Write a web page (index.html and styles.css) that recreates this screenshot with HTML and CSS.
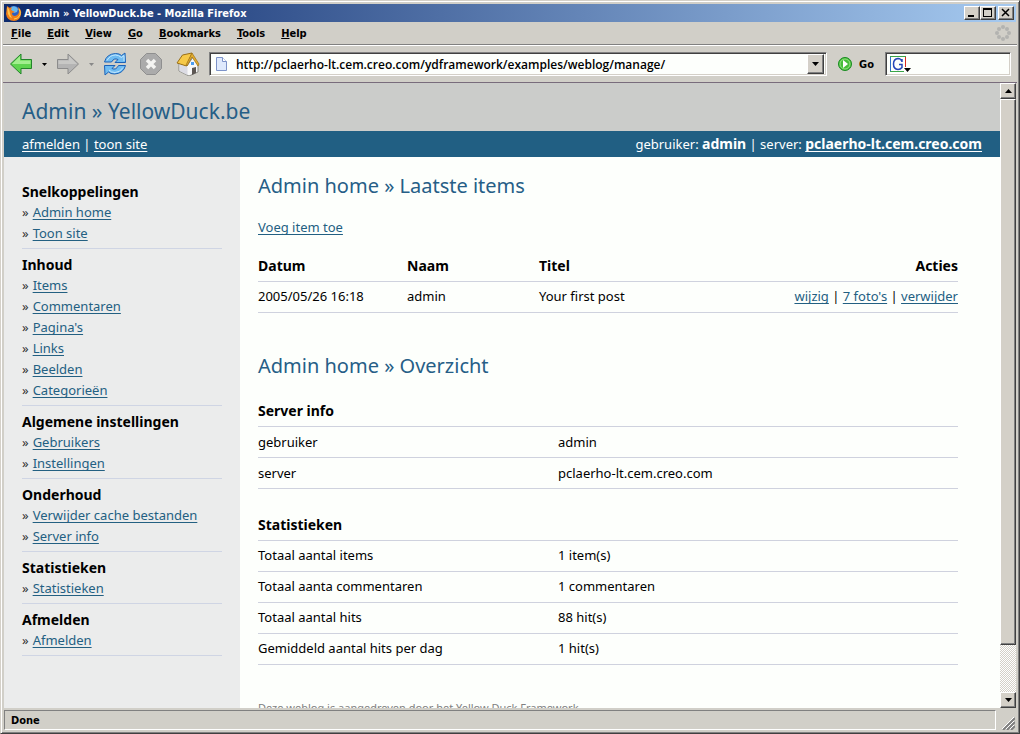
FILE: index.html
```html
<!DOCTYPE html>
<html lang="nl">
<head>
<meta charset="utf-8">
<title>Admin » YellowDuck.be</title>
<link rel="stylesheet" href="styles.css">
</head>
<body>
<div class="window">
  <header class="titlebar">
    <svg class="fox" width="16" height="16" viewBox="0 0 16 16" aria-hidden="true">
      <circle cx="8" cy="8" r="7" fill="#2d5fc0"/>
      <path d="M5 2q5-2 7 2l-1 3-3 1-3-3z" fill="#65b7ee"/>
      <path d="M1 1l3 2 2-1-1 3 4 2-3 1q0 3 3 3 4-1 4-5l-1-4q4 3 3 7-1 7-7 7-7 0-8-7z" fill="#ee7d1a"/>
      <path d="M1 2l1 7q1 3 4 4-2-3-2-5l-1-4z" fill="#ffc54a"/>
      <path d="M13 4q2 3 1 6-2 4-6 4" fill="none" stroke="#ffd04a"/>
    </svg>
    <span class="caption">Admin » YellowDuck.be - Mozilla Firefox</span>
    <button class="winbtn" type="button" aria-label="Minimize"><svg width="12" height="10" viewBox="0 0 12 10"><path d="M2 7h6v2H2z"/></svg></button>
    <button class="winbtn" type="button" aria-label="Maximize"><svg width="12" height="10" viewBox="0 0 12 10"><path fill-rule="evenodd" d="M1 0h9v9H1zM2 2v6h7V2z"/></svg></button>
    <button class="winbtn close" type="button" aria-label="Close"><svg width="12" height="10" viewBox="0 0 12 10"><path d="M2 1l7 7M9 1L2 8" stroke="#000" stroke-width="1.500"/></svg></button>
  </header>
  <nav class="menubar">
    <button type="button"><u>F</u>ile</button>
    <button type="button"><u>E</u>dit</button>
    <button type="button"><u>V</u>iew</button>
    <button type="button"><u>G</u>o</button>
    <button type="button"><u>B</u>ookmarks</button>
    <button type="button"><u>T</u>ools</button>
    <button type="button"><u>H</u>elp</button>
    <svg class="throbber" width="16" height="16" viewBox="0 0 16 16" fill="#b3b3b0" aria-hidden="true">
      <circle cx="8" cy="2" r="2"/><circle cx="12" cy="4" r="2"/><circle cx="14" cy="8" r="2"/><circle cx="12" cy="12" r="2"/><circle cx="8" cy="14" r="2"/><circle cx="4" cy="12" r="2"/><circle cx="2" cy="8" r="2"/><circle cx="4" cy="4" r="2"/>
    </svg>
  </nav>
  <div class="toolbar">
    <button class="tool" type="button" aria-label="Back"><svg width="24" height="24" viewBox="0 0 24 24"><path d="M1.500 12L12 2v5.500h10.500v9H12V22z" fill="#5fd44f" stroke="#23842a" stroke-linejoin="round"/><path d="M3 12l8-8v4.500h10.500V12z" fill="#a2ee8e"/></svg></button>
    <button class="drop" type="button" aria-label="Back history"><svg width="5" height="3" viewBox="0 0 5 3"><path d="M0 0h5L2.500 3z"/></svg></button>
    <button class="tool" type="button" aria-label="Forward"><svg width="24" height="24" viewBox="0 0 24 24"><path d="M22.500 12L12 2v5.500H1.500v9H12V22z" fill="#b4b4b4" stroke="#8c8c8c" stroke-linejoin="round"/><path d="M21 12l-8-8v4.500H2.500V12z" fill="#c8c8c6"/></svg></button>
    <button class="drop" type="button" aria-label="Forward history"><svg width="5" height="3" viewBox="0 0 5 3"><path d="M0 0h5L2.500 3z" fill="#888"/></svg></button>
    <button class="tool" type="button" aria-label="Reload"><svg width="24" height="24" viewBox="0 0 24 24"><g fill="#6fbcf2" stroke="#1c62b7" stroke-linejoin="round"><path d="M1.500 10q2-8 11-8.500 4 0 6 2L22 1l.5 9.500H12l3-3q-4-2-6.500 2.500z"/><path d="M22.500 13.500q-2 8-11 8.500-4 0-6-2L2 23l-.5-9.500H12l-3 3q4 2 6.500-3z"/></g><path d="M4 8.500Q7 3 12.500 3q3 0 6 2.500L21 3.500V9M20 15.500q-3 5-8 5-4 0-6-2.500" fill="none" stroke="#c5e8ff"/></svg></button>
    <button class="tool stop" type="button" aria-label="Stop"><svg width="24" height="24" viewBox="0 0 24 24"><path d="M7.500 1.500h9l6 6v9l-6 6h-9l-6-6v-9z" fill="#ababab" stroke="#8f8f8f"/><path d="M8 8l8 8M16 8l-8 8" stroke="#f4f4f2" stroke-width="3.500"/></svg></button>
    <button class="tool home" type="button" aria-label="Home"><svg width="24" height="24" viewBox="0 0 24 24"><path d="M3 11l8 3 6-9 5 8v7l-9 4-10-5z" fill="#f8f8f8" stroke="#8a8a84" stroke-linejoin="round"/><path d="M3.500 12l8 3v8l-8-4z" fill="#dcdce4"/><path d="M16 16l4-1v6l-4 2z" fill="#5d5753"/><path d="M15 10h3v3h-3z" fill="#4a9cf0"/><path d="M6.500 3L16 1l-5.500 13-9.500-3z" fill="#f6c948" stroke="#9a6f18" stroke-linejoin="round"/><path d="M16 1l7 11-1 2-6-9-5 9-1-1z" fill="#e3ad2e" stroke="#9a6f18" stroke-width=".7" stroke-linejoin="round"/></svg></button>
    <div class="address">
      <svg width="14" height="16" viewBox="0 0 14 16" aria-hidden="true"><path d="M1.500 1.500h6l4 4v9h-10z" fill="#dfeafc" stroke="#7d93c8"/><path d="M7.500 1.500v4h4" fill="#fff" stroke="#7d93c8"/></svg>
      <input type="text" aria-label="Address" value="http://pclaerho-lt.cem.creo.com/ydframework/examples/weblog/manage/">
      <button class="raised addrdrop" type="button" aria-label="Show history"><svg width="7" height="4" viewBox="0 0 7 4"><path d="M0 0h7L3.500 4z"/></svg></button>
    </div>
    <button class="go" type="button"><svg width="14" height="14" viewBox="0 0 14 14" aria-hidden="true"><circle cx="7" cy="7" r="6.500" fill="#47bd3a" stroke="#188b20"/><circle cx="7" cy="7" r="5" fill="none" stroke="#a4ea90" stroke-width=".8"/><path d="M5 3l5 4-5 4z" fill="#fff"/></svg>Go</button>
    <div class="search">
      <svg width="22" height="18" viewBox="0 0 22 18" aria-hidden="true"><path d="M.5 1v15" stroke="#2f6fc4"/><path d="M0 1.500h16M0 16.500h14" stroke="#3aa548"/><path d="M15.500 2v10" stroke="#d92a20"/><path d="M12 7V4M12 6.500Q11 3.500 8 3.500 3.500 4 3.500 9T8 14.500q2.500 0 4-2V9.500H9" fill="none" stroke="#2546b8" stroke-width="1.500"/><path d="M14 13h7l-3.500 4z"/></svg>
      <input type="text" aria-label="Search">
    </div>
  </div>
  <div class="viewport">
    <div class="page">
      <h1 class="site">Admin » YellowDuck.be</h1>
      <div class="bluebar">
        <div><a href="#">afmelden</a> | <a href="#">toon site</a></div>
        <div>gebruiker: <b>admin</b> | server: <a href="#"><b>pclaerho-lt.cem.creo.com</b></a></div>
      </div>
      <div class="columns">
        <aside class="side">
          <section><h3>Snelkoppelingen</h3><ul><li><a href="#">Admin home</a></li><li><a href="#">Toon site</a></li></ul></section>
          <section><h3>Inhoud</h3><ul><li><a href="#">Items</a></li><li><a href="#">Commentaren</a></li><li><a href="#">Pagina's</a></li><li><a href="#">Links</a></li><li><a href="#">Beelden</a></li><li><a href="#">Categorieën</a></li></ul></section>
          <section><h3>Algemene instellingen</h3><ul><li><a href="#">Gebruikers</a></li><li><a href="#">Instellingen</a></li></ul></section>
          <section><h3>Onderhoud</h3><ul><li><a href="#">Verwijder cache bestanden</a></li><li><a href="#">Server info</a></li></ul></section>
          <section><h3>Statistieken</h3><ul><li><a href="#">Statistieken</a></li></ul></section>
          <section><h3>Afmelden</h3><ul><li><a href="#">Afmelden</a></li></ul></section>
        </aside>
        <main class="main">
          <h2>Admin home » Laatste items</h2>
          <p class="add"><a href="#">Voeg item toe</a></p>
          <table class="items">
            <colgroup><col class="date"><col class="name"><col><col></colgroup>
            <thead><tr><th>Datum</th><th>Naam</th><th>Titel</th><th class="actions">Acties</th></tr></thead>
            <tbody><tr><td>2005/05/26 16:18</td><td>admin</td><td>Your first post</td><td class="actions"><a href="#">wijzig</a> | <a href="#">7 foto's</a> | <a href="#">verwijder</a></td></tr></tbody>
          </table>
          <h2>Admin home » Overzicht</h2>
          <table class="info">
            <colgroup><col class="key"><col></colgroup>
            <thead><tr><th colspan="2">Server info</th></tr></thead>
            <tbody><tr><td>gebruiker</td><td>admin</td></tr><tr><td>server</td><td>pclaerho-lt.cem.creo.com</td></tr></tbody>
          </table>
          <table class="info">
            <colgroup><col class="key"><col></colgroup>
            <thead><tr><th colspan="2">Statistieken</th></tr></thead>
            <tbody><tr><td>Totaal aantal items</td><td>1 item(s)</td></tr><tr><td>Totaal aanta commentaren</td><td>1 commentaren</td></tr><tr><td>Totaal aantal hits</td><td>88 hit(s)</td></tr><tr><td>Gemiddeld aantal hits per dag</td><td>1 hit(s)</td></tr></tbody>
          </table>
          <p class="credit">Deze weblog is aangedreven door het Yellow Duck Framework</p>
        </main>
      </div>
    </div>
    <div class="scrollbar">
      <button class="raised" type="button" aria-label="Scroll up"><svg width="7" height="4" viewBox="0 0 7 4"><path d="M0 4h7L3.500 0z"/></svg></button>
      <div class="track"><div class="raised thumb"></div></div>
      <button class="raised" type="button" aria-label="Scroll down"><svg width="7" height="4" viewBox="0 0 7 4"><path d="M0 0h7L3.500 4z"/></svg></button>
    </div>
  </div>
  <footer class="status">
    <div class="message">Done</div>
    <svg width="13" height="13" viewBox="0 0 13 13" aria-hidden="true"><path d="M1 13L13 1M5 13l8-8M9 13l4-4" stroke="#808080" stroke-width="2"/><path d="M0 12L12 0M4 12l8-8M8 12l4-4" stroke="#fff"/></svg>
  </footer>
</div>
</body>
</html>
```
FILE: styles.css
```css
* { box-sizing: border-box; }
body {
  margin: 0;
  font-family: "Noto Sans", "Open Sans", sans-serif;
  font-size: 13px;
  line-height: 21px;
  color: #000;
}
button, input { font: inherit; color: inherit; padding: 0; margin: 0; border: 0; background: none; }
svg { display: block; flex: none; }

.window {
  display: flex;
  flex-direction: column;
  height: 100vh;
  overflow: hidden;
  padding: 2px;
  background: #d1cfc8;
  border: 1px solid;
  border-color: #d4d0c8 #404040 #404040 #d4d0c8;
  box-shadow: inset 1px 1px #fff, inset -1px -1px #808080;
}
.titlebar, .menubar, .toolbar, .status {
  flex: none;
  font: bold 11px "DejaVu Sans Condensed", "Noto Sans", sans-serif;
}
.titlebar {
  display: flex;
  align-items: center;
  height: 18px;
  margin: 1px 1px 0;
  padding-right: 2px;
  background: linear-gradient(to right, #0d2a6c, #a6caf0);
  color: #fff;
}
.fox { margin: 0 2px; }
.caption { flex: 1; }
.winbtn, .raised {
  display: flex;
  align-items: center;
  justify-content: center;
  background: #d4d0c8;
  border: 1px solid;
  border-color: #fff #404040 #404040 #fff;
  box-shadow: inset -1px -1px #808080;
}
.winbtn { width: 16px; height: 14px; }
.close { margin-left: 2px; }
.menubar {
  display: flex;
  align-items: center;
  gap: 16px;
  height: 23px;
  padding: 0 6px 0 8px;
  border-bottom: 1px solid #808080;
}
.throbber { margin-left: auto; }
.toolbar {
  display: flex;
  align-items: center;
  height: 38px;
  padding: 0 6px;
  border-top: 1px solid #fff;
  border-bottom: 1px solid #796c7c;
}
.drop { margin: 0 9px; }
.stop { margin-left: 12px; }
.home { margin: 0 9px 0 13px; }
.address, .search {
  display: flex;
  align-items: center;
  height: 24px;
  background: #fdfffc;
  border: 1px solid;
  border-color: #808080 #fff #fff #808080;
  box-shadow: inset 1px 1px #404040, inset -1px -1px #d4d0c8;
}
.address { flex: 1; gap: 7px; padding: 2px 2px 2px 5px; font: 600 12px "Open Sans", "Noto Sans", sans-serif; }
.address input { flex: 1; min-width: 0; outline: 0; }
.addrdrop { width: 17px; height: 20px; }
.go { display: flex; align-items: center; gap: 7px; margin: 0 11px; }
.search { width: 126px; padding: 2px 4px; }
.search input { flex: 1; min-width: 0; outline: 0; }

.viewport { display: flex; flex: 1; min-height: 0; padding: 0 1px; }
.page { display: flex; flex-direction: column; flex: 1; min-width: 0; overflow: hidden; background: #fdfffc; }
.site {
  flex: none;
  margin: 0;
  padding: 16px 18px 7px;
  background: #cbccca;
  color: #265e87;
  font-size: 21px;
  font-weight: normal;
  line-height: 25px;
}
.bluebar {
  display: flex;
  align-items: center;
  justify-content: space-between;
  flex: none;
  height: 26px;
  padding: 0 18px;
  background: #215f83;
  color: #fff;
}
a {
  color: #236082;
  text-decoration: underline 1px;
  text-decoration-skip-ink: none;
  text-underline-offset: 2px;
}
b { font-size: 14px; }
.bluebar a { color: #fff; }
.columns { display: flex; flex: 1; min-height: 0; }
.side { flex: none; width: 236px; padding: 24px 18px 0; background: #ebecec; }
.side section { padding-bottom: 4px; margin-bottom: 5px; border-bottom: 1px solid #cfd5e4; }
h3 { margin: 0; font-size: 14px; line-height: 21px; }
.side ul { margin: 0; padding: 0; list-style: none; }
.side li::before { content: "»"; margin-right: 4px; color: #333; }
.main { flex: 1; min-width: 0; padding: 16px 42px 0 18px; }
h2 { margin: 0; font-size: 20px; font-weight: normal; line-height: 26px; color: #265e87; }
.add { margin: 18px 0 12px; }
table { width: 100%; border-collapse: collapse; table-layout: fixed; }
th, td { height: 31px; padding: 4px 0; text-align: left; border-bottom: 1px solid #cfd2de; }
th { font-size: 14px; }
.items { margin-bottom: 40px; }
.date { width: 149px; }
.name { width: 132px; }
.items .actions { text-align: right; }
.info { margin: 17px 0 20px; }
.info + .info { margin: 0; }
.key { width: 300px; }
.credit { margin: 32px 0 0; color: #808080; font-size: 11px; }

.scrollbar { display: flex; flex-direction: column; flex: none; width: 16px; }
.scrollbar button { flex: none; height: 16px; }
.track {
  flex: 1;
  background: repeating-conic-gradient(#fff 0 25%, #d4d0c8 0 50%) 0 0 / 2px 2px;
}
.thumb { height: 92%; }
.status { display: flex; align-items: flex-end; gap: 6px; height: 23px; padding: 2px 2px 1px 1px; }
.message {
  flex: 1;
  height: 20px;
  padding: 3px 6px;
  border: 1px solid;
  border-color: #808080 #fff #fff #808080;
}
```
